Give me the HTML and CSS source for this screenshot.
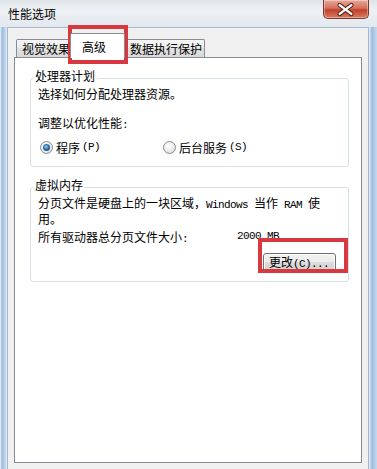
FILE: index.html
```html
<!DOCTYPE html>
<html lang="zh-CN">
<head>
  <meta charset="UTF-8">
  <title>性能选项</title>
  <link rel="stylesheet" href="styles.css">
</head>
<body>

  <div class="window">
    <div class="titlebar">
      <span class="title">性能选项</span>
      <span class="close">
        <svg width="46" height="19" viewBox="0 0 46 19">
          <path d="M17 5 L29 14 M29 5 L17 14" stroke="#5a2218" stroke-width="4.5" stroke-linecap="round"/>
          <path d="M17 5 L29 14 M29 5 L17 14" stroke="#fff" stroke-width="2.4" stroke-linecap="round"/>
        </svg>
      </span>
    </div>

    <div class="client">
      <div class="tabs">
        <div class="tab first">视觉效果</div>
        <div class="tab active">高级</div>
        <div class="tab">数据执行保护</div>
      </div>

      <div class="panel">
        <fieldset class="group">
          <legend>处理器计划</legend>
          <p class="line">选择如何分配处理器资源。</p>
          <p class="line gap-big">调整以优化性能<span class="en">:</span></p>
          <div class="radios">
            <label class="option first">
              <span class="radio on"></span>程序<span class="en">(P)</span>
            </label>
            <label class="option">
              <span class="radio"></span>后台服务<span class="en">(S)</span>
            </label>
          </div>
        </fieldset>

        <fieldset class="group memory">
          <legend>虚拟内存</legend>
          <p class="line">分页文件是硬盘上的一块区域，<span class="en">Windows </span>当作<span class="en"> RAM </span>使<br>用。</p>
          <div class="line size">
            <span class="size-label">所有驱动器总分页文件大小<span class="en">:</span></span>
            <span class="en">2000 MB</span>
          </div>
          <div class="actions">
            <button type="button">更改<span class="en">(C)...</span></button>
          </div>
        </fieldset>
      </div>
    </div>

    <!-- red annotation boxes -->
    <div class="mark mark-tab"></div>
    <div class="mark mark-button"></div>
  </div>

</body>
</html>
```

FILE: styles.css
```css
/* Reset styling */
* {
  margin: 0;
  padding: 0;
  box-sizing: border-box;
}

body {
  font-family: "Noto Sans CJK SC", sans-serif;
  font-size: 12px;
  color: #000;
  background: #dfe8f1;
}

.window {
  position: relative;
  width: 377px;
  height: 469px;
  overflow: hidden;
  display: flex;
  flex-direction: column;
  background: linear-gradient(90deg, #eef3f8 0, #9ebcdf 2px, #bcd2ea 5px, #e6eef6 7px, #e6eef6 369px, #9ebcdf 372px, #c7daee 377px);
}

.titlebar {
  height: 27px;
  display: flex;
  justify-content: space-between;
  align-items: flex-start;
  padding: 0 8px;
  background: linear-gradient(180deg, #dfe4ea, #eef1f4 40%, #e2e8ef);
}

.title {
  margin-top: 6px;
  line-height: 16px;
}

.close {
  width: 46px;
  height: 19px;
  border: 1px solid #7a3a30;
  border-top: none;
  border-radius: 0 0 5px 5px;
  background: linear-gradient(180deg, #e9a999 0, #d4715c 45%, #c2412b 55%, #d77c62 100%);
  box-shadow: inset 0 0 0 1px rgba(255, 255, 255, 0.35);
  display: flex;
}

.close svg {
  display: block;
  margin-left: -1px;
}

.client {
  flex: 1;
  margin: 0 8px 0 7px;
  background: #f0f0f0;
  border: 1px solid #a9b8c9;
  border-bottom: none;
  padding: 5px 6px 6px 6px;
  display: flex;
  flex-direction: column;
}

/* Tabs */
.tabs {
  display: flex;
  align-items: flex-end;
  height: 25px;
  margin-bottom: -1px;
}

.tab {
  border: 1px solid #898c95;
  border-bottom: none;
  border-radius: 2px 2px 0 0;
  background: linear-gradient(180deg, #f6f6f6, #ececec 50%, #e2e2e2 50%, #d9d9d9);
  line-height: 14px;
  padding: 2px 2px 1px 5px;
  margin-bottom: 1px;
  white-space: nowrap;
}

.tab.first {
  margin-left: 2px;
  padding-right: 1px;
}

.tab.active {
  position: relative;
  z-index: 1;
  background: #fff;
  padding: 6px 18px 4px 11px;
  margin: 0 -1px 0 -2px;
}

.panel {
  flex: 1;
  background: #fff;
  border: 1px solid #898c95;
  padding: 0 12px 0 15px;
}

/* Group boxes */
.group {
  margin-top: 11px;
  border: 1px solid #d5dfe5;
  border-radius: 3px;
  padding: 0 10px 12px 7px;
}

.group legend {
  line-height: 14px;
  padding: 0 2px 4px 2px;
  margin-left: -5px;
}

.line {
  line-height: 13px;
}

.gap-big {
  margin-top: 16px;
}

/* half-width latin, 6px per character like the bitmap font */
.en {
  font-family: "Liberation Mono", monospace;
  font-size: 11px;
  letter-spacing: -0.6px;
}

.radios {
  display: flex;
  margin-top: 9px;
  margin-left: 2px;
  line-height: 13px;
}

.option {
  display: flex;
  align-items: center;
  gap: 2px;
}

.option.first {
  width: 123px;
}

.radio {
  width: 13px;
  height: 13px;
  border-radius: 50%;
  border: 1px solid #8a8c8e;
  background: radial-gradient(circle at 40% 35%, #fff 0, #f0f0f0 40%, #d6d6d6 100%);
  display: flex;
  align-items: center;
  justify-content: center;
  margin-right: 1px;
}

.radio.on::after {
  content: "";
  width: 7px;
  height: 7px;
  border-radius: 50%;
  background: radial-gradient(circle at 45% 40%, #9fd1f2 0, #2f6fa8 45%, #123f6e 100%);
}

.memory {
  padding-right: 12px;
  padding-bottom: 9px;
}

.size {
  display: flex;
  margin-top: 5px;
}

.size-label {
  width: 199px;
}

.actions {
  display: flex;
  justify-content: flex-end;
  margin-top: 7px;
}

button {
  width: 73px;
  height: 19px;
  border: 1px solid #707070;
  border-radius: 3px;
  background: linear-gradient(180deg, #f2f2f2, #ebebeb 50%, #dddddd 50%, #cfcfcf);
  box-shadow: inset 0 0 0 1px #fcfcfc;
  font-family: "Noto Sans CJK SC", sans-serif;
  font-size: 12px;
  line-height: 15px;
  color: #000;
  text-align: left;
  padding-left: 5px;
}

/* Annotation boxes lying over the dialog */
.mark {
  position: absolute;
  border: 4px solid #d8383f;
}

.mark-tab {
  left: 68px;
  top: 25px;
  width: 60px;
  height: 39px;
}

.mark-button {
  left: 258px;
  top: 238px;
  width: 90px;
  height: 35px;
}
```
